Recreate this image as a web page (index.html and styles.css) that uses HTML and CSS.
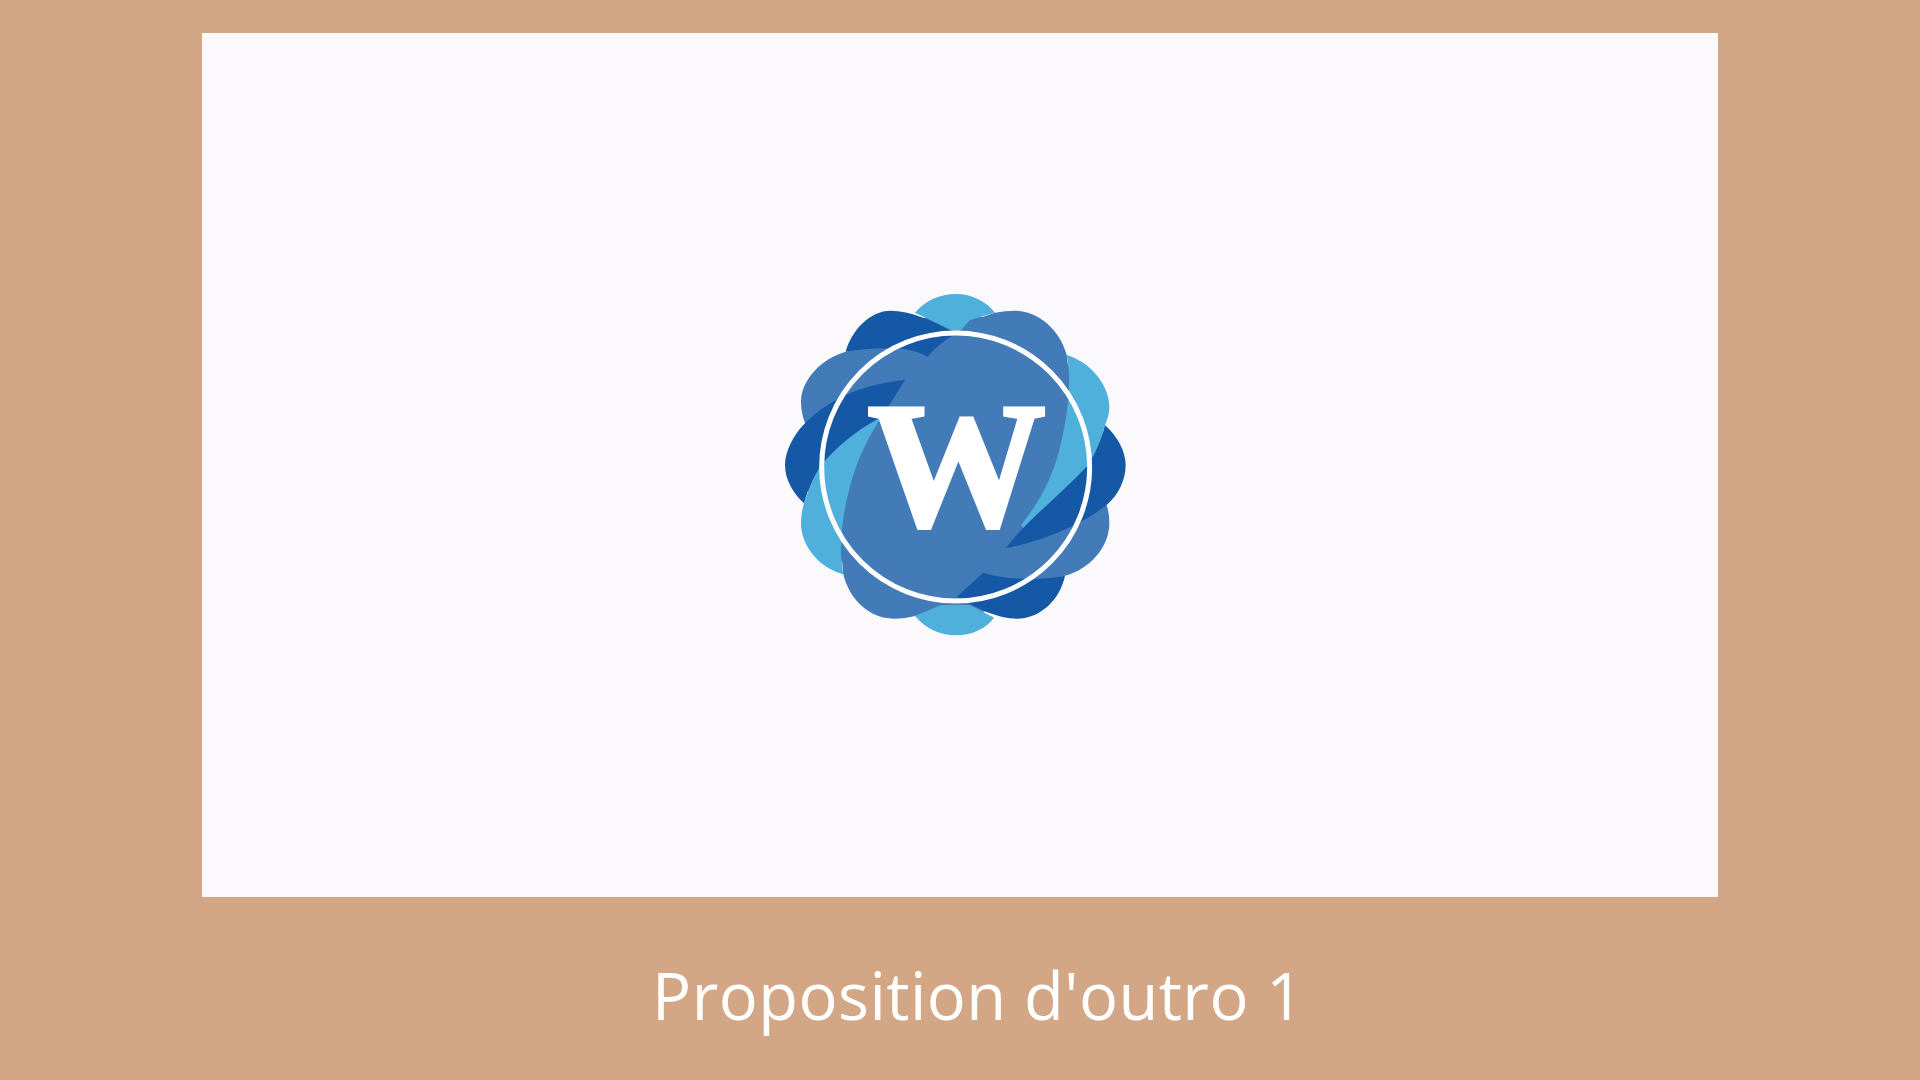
FILE: index.html
```html
<!DOCTYPE html>
<html lang="fr">
  <head>
    <meta charset="UTF-8" />
    <title>Proposition d'outro 1</title>
    <link rel="stylesheet" href="styles.css">
  </head>
  <body>
    <div class="panel">
      <svg class="logo" viewBox="0 0 1200 1080" width="400" height="360">
        <!-- base -->
        <circle class="mid" cx="587" cy="553" r="450" />
        <!-- light petals -->
        <path class="light" d="M465,98 C495,62 540,42 587,42 C635,42 680,65 705,98 L630,120 L595,160 Z" />
        <path class="light" d="M465,1008 C495,1045 540,1066 587,1066 C635,1066 680,1045 702,1013 L630,975 L530,975 Z" />
        <path class="light" d="M920,225 C990,245 1048,315 1048,380 C1048,400 1043,418 1035,435 L990,590 L800,760 L783,735 C840,665 885,580 905,480 C925,390 935,300 920,225 Z" />
        <path class="light" d="M132,670 C126,690 123,710 123,730 C123,800 180,865 250,883 C235,800 245,690 285,570 C305,510 335,455 365,410 L200,480 Z" />
        <!-- mid petals -->
        <path class="mid" d="M705,98 C725,94 745,92 765,92 C835,92 900,150 920,225 L928,290 L800,400 L590,165 C620,130 665,110 705,98 Z" />
        <path class="mid" d="M257,215 C185,235 123,300 123,365 C123,388 128,410 135,430 L290,345 L432,305 L400,180 Z" />
        <path class="mid" d="M250,883 C268,960 330,1016 400,1016 C425,1016 447,1013 465,1008 L530,980 L587,960 L400,700 L242,800 Z" />
        <path class="mid" d="M915,887 C990,868 1048,800 1048,730 C1048,712 1046,695 1040,675 L800,780 L820,910 Z" />
        <!-- dark petals -->
        <path class="dark" d="M257,215 C275,150 330,92 392,92 C450,92 520,122 578,156 L590,160 L565,175 C545,188 520,210 503,230 C470,212 430,205 400,205 C350,203 300,207 257,215 Z" />
        <path class="dark" d="M135,430 C100,465 75,515 75,555 C75,600 100,640 132,670 C145,625 165,575 197,540 C250,480 310,440 365,410 C390,375 415,330 435,300 C330,310 220,345 135,430 Z" />
        <path class="dark" d="M1035,435 C1073,470 1097,515 1097,555 C1097,600 1075,645 1040,675 C970,730 860,780 738,805 C790,730 880,665 985,555 C1005,520 1025,480 1035,435 Z" />
        <path class="dark" d="M590,950 C620,925 650,895 670,878 C720,895 820,905 915,887 C900,960 840,1016 770,1016 C715,1016 650,985 590,950 Z" />
        <!-- ring and letter -->
        <circle class="ring" cx="587" cy="561" r="402" />
        <text class="letter" x="590" y="736">W</text>
      </svg>
    </div>
    <p class="caption">Proposition d'outro 1</p>
  </body>
</html>
```
FILE: styles.css
```css
body {
  margin: 0;
  height: 1080px;
  overflow: hidden;
  background-color: #d3a785;
  font-family: "Open Sans", sans-serif;
  display: flex;
  flex-direction: column;
  align-items: center;
}

.panel {
  width: 1516px;
  height: 864px;
  margin-top: 33px;
  background-color: #fbf9fc;
  display: flex;
  justify-content: center;
  align-items: center;
}

.logo {
  display: block;
  margin-bottom: 10px;
  filter: blur(0.5px);
}

.mid {
  fill: #437ab8;
}

.light {
  fill: #4fb0dc;
}

.dark {
  fill: #1558a5;
}

.ring {
  fill: none;
  stroke: #fff;
  stroke-width: 15;
}

.letter {
  fill: #fff;
  stroke: #fff;
  stroke-width: 12;
  font-family: "Liberation Serif", serif;
  font-weight: bold;
  font-size: 535px;
  text-anchor: middle;
}

.caption {
  margin: 53px 0 0 36px;
  color: #fff;
  font-size: 65px;
  letter-spacing: 0.45px;
  line-height: 90px;
}
```
